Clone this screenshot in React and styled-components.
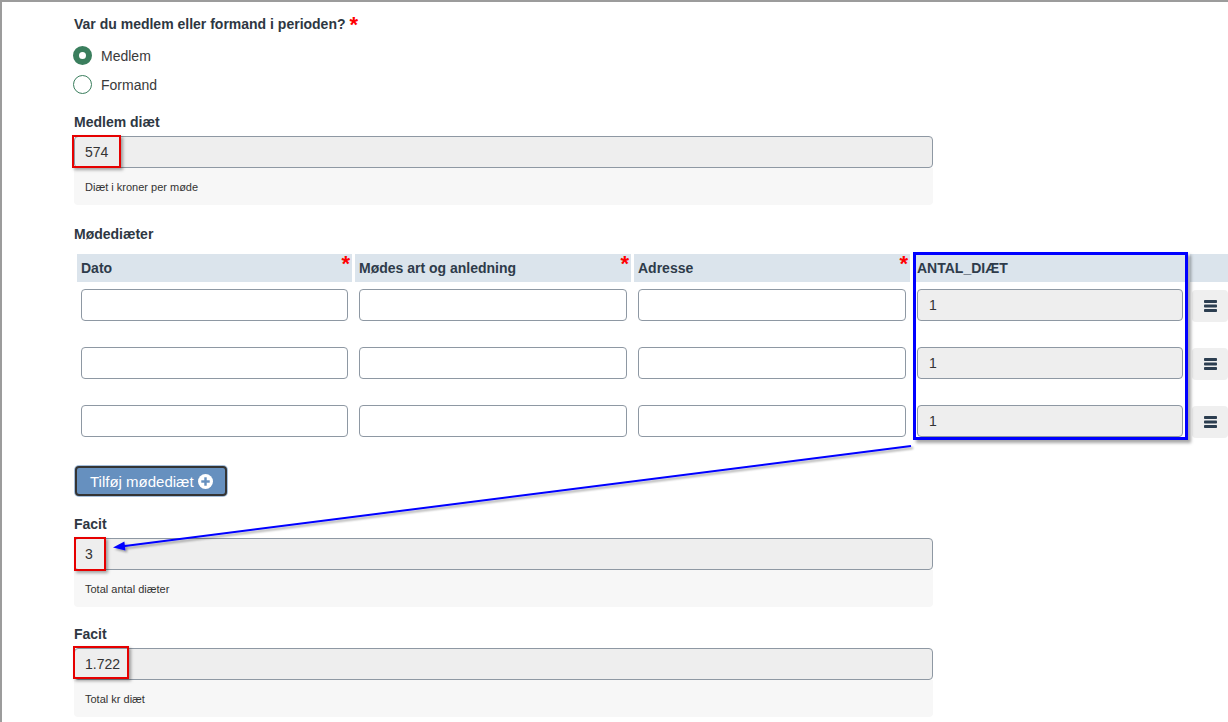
import React from "react";
import styled, { createGlobalStyle } from "styled-components";

const GlobalStyle = createGlobalStyle`
  html, body { margin: 0; padding: 0; background: #fff; }
  body {
    font-family: "Liberation Sans", Arial, sans-serif;
    color: #333;
    overflow: hidden;
  }
  * { box-sizing: border-box; }
`;

const Page = styled.div`
  position: relative;
  width: 1228px;
  height: 722px;
  overflow: hidden;
  border-top: 2px solid #9c9c9c;
  border-left: 2px solid #9c9c9c;
  padding: 12px 0 0 72px;
`;

const Column = styled.div`
  width: 859px;
`;

const Question = styled.div`
  font-size: 14px;
  line-height: 20px;
  font-weight: bold;
  color: #2e3742;
`;

const Req = styled.span`
  color: #f00;
  font-size: 22px;
  font-weight: bold;
  line-height: 0;
  margin-left: 4px;
  vertical-align: -3px;
`;

const RadioList = styled.div`
  margin-top: 7px;
  display: flex;
  flex-direction: column;
`;

const RadioRow = styled.label`
  height: 29px;
  display: flex;
  align-items: center;
  gap: 8px;
  font-size: 14px;
  color: #3a3a3a;
`;

const RadioCircle = styled.span`
  width: 19px;
  height: 19px;
  border-radius: 50%;
  flex: none;
  margin-left: -1px;
  margin-right: 1px;
  border: ${(p) => (p.$checked ? "6px solid #3a7e5d" : "1.5px solid #3a7e5d")};
  background: #fff;
`;

const FieldGroup = styled.div`
  margin-top: ${(p) => p.$mt || 16}px;
`;

const Label = styled.div`
  font-size: 14px;
  line-height: 20px;
  font-weight: bold;
  color: #2e3742;
  margin-bottom: ${(p) => p.$mb ?? 4}px;
`;

const InputWrap = styled.div`
  position: relative;
`;

const ReadOnlyInput = styled.div`
  height: 32px;
  background: #eeeeee;
  border: 1px solid #8e98a3;
  border-radius: 4px;
  padding: 0 10px;
  display: flex;
  align-items: center;
  font-size: 14px;
  color: #333;
`;

const Highlight = styled.div`
  position: absolute;
  left: ${(p) => p.$left}px;
  top: ${(p) => p.$top}px;
  width: ${(p) => p.$w}px;
  height: ${(p) => p.$h}px;
  border: 2px solid #e60000;
  box-shadow: 2px 2px 3px rgba(0, 0, 0, 0.35);
  pointer-events: none;
`;

const Help = styled.div`
  height: 37px;
  background: #f7f7f7;
  border-radius: 0 0 4px 4px;
  padding: 0 11px;
  display: flex;
  align-items: center;
  font-size: 11px;
  color: #333;
`;

const Grid = styled.div`
  margin-left: 3px;
  display: grid;
  grid-template-columns: 275px 276px 276px 274px 60px;
  column-gap: 3px;
`;

const HeadCell = styled.div`
  position: relative;
  height: 28px;
  background: #dbe4ec;
  padding: 0 4px;
  display: flex;
  align-items: center;
  font-size: 14px;
  font-weight: bold;
  color: #2e3b4a;
`;

const HeadReq = styled.span`
  position: absolute;
  right: 2px;
  top: -1px;
  color: #f00;
  font-size: 22px;
  font-weight: bold;
  line-height: 22px;
`;

const BodyCell = styled.div`
  padding: 7px 4px 19px;
`;

const MenuCell = styled.div`
  padding: 8px 0 18px 2px;
`;

const TextInput = styled.div`
  height: 32px;
  border: 1px solid #8e98a3;
  border-radius: 4px;
  background: ${(p) => (p.$readOnly ? "#eeeeee" : "#fff")};
  padding: 0 11px;
  display: flex;
  align-items: center;
  font-size: 14px;
  color: #333;
`;

const MenuButton = styled.div`
  width: 36px;
  height: 32px;
  border-radius: 4px;
  background: #efefef;
  display: flex;
  align-items: center;
  justify-content: center;
  color: #2c3e50;
`;

const AddButton = styled.button`
  margin: 10px 0 0 1px;
  height: 30px;
  width: max-content;
  padding: 0 12px 0 13px;
  display: flex;
  align-items: center;
  gap: 4px;
  background: #6690bf;
  color: #fff;
  font-family: "Liberation Sans", Arial, sans-serif;
  font-size: 15px;
  border: 2px solid #343434;
  border-radius: 4px;
  box-shadow: 0 0 0 1px #a6bfdb;
`;

const Overlay = styled.svg`
  position: absolute;
  left: -2px;
  top: -2px;
  width: 1228px;
  height: 722px;
  pointer-events: none;
`;

const BlueBox = styled.div`
  position: absolute;
  left: 911px;
  top: 250px;
  width: 275px;
  height: 188px;
  border: 3px solid #0000ff;
  box-shadow: 3px 3px 3px rgba(0, 0, 0, 0.35);
  pointer-events: none;
`;

const Bars = () => (
  <svg width="13" height="12" viewBox="0 0 13 12">
    <rect x="0" y="0" width="13" height="3" rx="0.8" fill="currentColor" />
    <rect x="0" y="4.5" width="13" height="3" rx="0.8" fill="currentColor" />
    <rect x="0" y="9" width="13" height="3" rx="0.8" fill="currentColor" />
  </svg>
);

const PlusCircle = () => (
  <svg width="15" height="15" viewBox="0 0 16 16">
    <circle cx="8" cy="8" r="8" fill="#fff" />
    <rect x="3.5" y="6.7" width="9" height="2.6" fill="#6690bf" />
    <rect x="6.7" y="3.5" width="2.6" height="9" fill="#6690bf" />
  </svg>
);

function Field({ label, value, help, mt, box }) {
  return (
    <FieldGroup $mt={mt}>
      <Label>{label}</Label>
      <InputWrap>
        <ReadOnlyInput>{value}</ReadOnlyInput>
        {box && <Highlight $left={box[0]} $top={box[1]} $w={box[2]} $h={box[3]} />}
      </InputWrap>
      <Help>{help}</Help>
    </FieldGroup>
  );
}

const headers = [
  { t: "Dato", req: true },
  { t: "Mødes art og anledning", req: true },
  { t: "Adresse", req: true },
  { t: "ANTAL_DIÆT", req: false },
  { t: "", req: false },
];

export default function App() {
  const rows = [1, 1, 1];
  return (
    <>
      <GlobalStyle />
      <Page>
        <Column>
          <Question>
            Var du medlem eller formand i perioden?<Req>*</Req>
          </Question>
          <RadioList>
            <RadioRow>
              <RadioCircle $checked />
              Medlem
            </RadioRow>
            <RadioRow>
              <RadioCircle />
              Formand
            </RadioRow>
          </RadioList>
          <Field
            mt={13}
            label="Medlem diæt"
            value="574"
            help="Diæt i kroner per møde"
            box={[-2, -1, 49, 33]}
          />
          <FieldGroup $mt={19}>
            <Label $mb={10}>Mødediæter</Label>
          </FieldGroup>
        </Column>
        <Grid>
          {headers.map((h, i) => (
            <HeadCell key={i}>
              {h.t}
              {h.req && <HeadReq>*</HeadReq>}
            </HeadCell>
          ))}
          {rows.map((v, r) => (
            <React.Fragment key={r}>
              <BodyCell><TextInput /></BodyCell>
              <BodyCell><TextInput /></BodyCell>
              <BodyCell><TextInput /></BodyCell>
              <BodyCell><TextInput $readOnly>{v}</TextInput></BodyCell>
              <MenuCell>
                <MenuButton><Bars /></MenuButton>
              </MenuCell>
            </React.Fragment>
          ))}
        </Grid>
        <Column>
          <AddButton>
            Tilføj mødediæt <PlusCircle />
          </AddButton>
          <Field
            mt={18}
            label="Facit"
            value="3"
            help="Total antal diæter"
            box={[0, -1, 32, 34]}
          />
          <Field
            mt={17}
            label="Facit"
            value="1.722"
            help="Total kr diæt"
            box={[-1, -2, 56, 33]}
          />
        </Column>
        <BlueBox />
        <Overlay viewBox="0 0 1228 722">
          <defs>
            <filter id="sh" x="-5%" y="-50%" width="110%" height="200%">
              <feDropShadow dx="2" dy="2" stdDeviation="1" floodColor="#000" floodOpacity="0.35" />
            </filter>
          </defs>
          <g filter="url(#sh)">
            <line x1="911" y1="446" x2="123" y2="546.2" stroke="#0000ff" strokeWidth="2" />
            <polygon points="113,547.5 125.4,550.5 124.4,541.5" fill="#0000ff" />
          </g>
        </Overlay>
      </Page>
    </>
  );
}
